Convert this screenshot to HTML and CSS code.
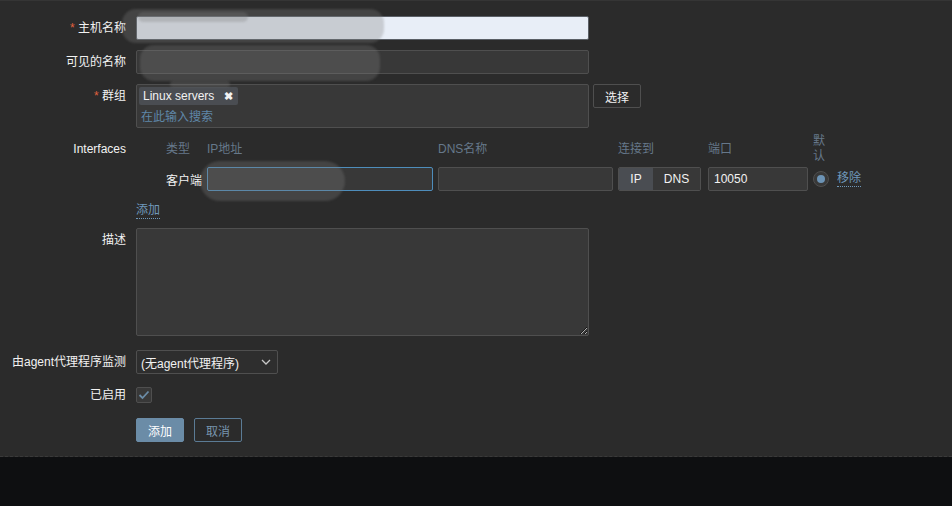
FILE: index.html
```html
<!DOCTYPE html>
<html lang="zh-CN">
<head>
    <meta charset="UTF-8">
    <title>主机</title>
    <link rel="stylesheet" href="styles.css">
</head>
<body>
    <div class="form-wrap">
        <div class="row">
            <label class="lbl"><span class="req">*</span> 主机名称</label>
            <input class="field autofill" type="text">
        </div>
        <div class="row">
            <label class="lbl">可见的名称</label>
            <input class="field" type="text">
        </div>
        <div class="row">
            <label class="lbl"><span class="req">*</span> 群组</label>
            <div class="multiselect">
                <span class="tag">Linux servers <b class="tag-x">&#10006;</b></span>
                <span class="ms-search">在此输入搜索</span>
            </div>
            <button class="btn-alt">选择</button>
        </div>

        <div class="row row-iface">
            <label class="lbl lbl-iface">Interfaces</label>
            <div class="iface">
                <div class="iface-grid">
                    <div class="th">类型</div>
                    <div class="th">IP地址</div>
                    <div class="th">DNS名称</div>
                    <div class="th">连接到</div>
                    <div class="th">端口</div>
                    <div class="th th-def">默认</div>
                    <div class="th"></div>

                    <div class="td type">客户端</div>
                    <div class="td"><input class="field ip focused" type="text"></div>
                    <div class="td"><input class="field dns" type="text"></div>
                    <div class="td">
                        <div class="toggle">
                            <span class="tg on">IP</span><span class="tg">DNS</span>
                        </div>
                    </div>
                    <div class="td"><input class="field port" type="text" value="10050"></div>
                    <div class="td"><span class="radio"><span class="dot"></span></span></div>
                    <div class="td"><a class="link">移除</a></div>
                </div>
                <a class="link add-link">添加</a>
            </div>
        </div>

        <div class="row row-desc">
            <label class="lbl">描述</label>
            <textarea class="field desc"></textarea>
        </div>
        <div class="row row-proxy">
            <label class="lbl">由agent代理程序监测</label>
            <div class="select">
                <span>(无agent代理程序)</span>
                <svg width="10" height="6" viewBox="0 0 10 6"><path d="M1 1l4 4 4-4" fill="none" stroke="#c8c8c8" stroke-width="1.3"/></svg>
            </div>
        </div>
        <div class="row row-check">
            <label class="lbl lbl-check">已启用</label>
            <span class="checkbox">
                <svg width="12" height="10" viewBox="0 0 12 10"><path d="M1.5 5l3 3 6-6.5" fill="none" stroke="#6b8ca7" stroke-width="1.8"/></svg>
            </span>
        </div>
        <div class="row row-btns">
            <span class="lbl"></span>
            <button class="btn-main">添加</button>
            <button class="btn-cancel">取消</button>
        </div>

        <!-- redaction smudges from the screenshot -->
        <div class="smudge s1"></div>
        <div class="smudge s2"></div>
        <div class="smudge s3"></div>
        <div class="smudge s4"></div>
        <div class="smudge s5"></div>
    </div>
</body>
</html>
```

FILE: styles.css
```css
body {
    margin: 0;
    background: #0e0f11;
    font-family: Arial, "Liberation Sans", "Noto Sans CJK SC", sans-serif;
    font-size: 12px;
    color: #f2f2f2;
}
.form-wrap {
    position: relative;
    height: 457px;
    box-sizing: border-box;
    background: #2b2b2b;
    border-top: 1px solid #353535;
    border-bottom: 1px dashed #3a3a3a;
    padding-top: 15px;
}
.row {
    display: flex;
    align-items: flex-start;
    margin-bottom: 10px;
}
.lbl {
    width: 126px;
    flex: none;
    padding-right: 10px;
    text-align: right;
    line-height: 24px;
}
.req {
    color: #e0613f;
}
.field {
    box-sizing: border-box;
    height: 24px;
    width: 453px;
    margin: 0;
    padding: 0 5px;
    background: #383838;
    border: 1px solid #4f4f4f;
    border-radius: 2px;
    color: #f2f2f2;
    font: inherit;
    outline: none;
}
.autofill {
    background: #e8eef7;
    border-color: #5a5f66;
}
.multiselect {
    box-sizing: border-box;
    width: 453px;
    height: 44px;
    background: #383838;
    border: 1px solid #4f4f4f;
    border-radius: 2px;
    padding: 2px 2px 0;
}
.tag {
    display: inline-block;
    background: #4a4d52;
    border-radius: 2px;
    height: 18px;
    line-height: 18px;
    padding: 0 5px 0 4px;
}
.tag-x {
    font-size: 11px;
    margin-left: 6px;
}
.ms-search {
    display: block;
    color: #5f87a8;
    line-height: 24px;
    padding-left: 2px;
}
.btn-alt {
    margin-left: 4px;
    box-sizing: border-box;
    width: 48px;
    height: 24px;
    background: #2b2b2b;
    border: 1px solid #4f4f4f;
    border-radius: 2px;
    color: #f2f2f2;
    font: inherit;
}
.row-iface {
    margin-top: -4px;
    margin-bottom: 9px;
}
.lbl-iface {
    line-height: 30px;
}
.iface {
    padding-left: 30px;
}
.iface-grid {
    display: grid;
    grid-template-columns: 41px 231px 180px 90px 105px 24px auto;
    grid-template-rows: 30px 24px;
    row-gap: 3px;
}
.th {
    color: #66788a;
    align-self: center;
    line-height: 15px;
}
.th-def {
    width: 14px;
}
.td {
    display: flex;
    align-items: center;
}
.type {
    color: #f2f2f2;
}
.field.ip {
    width: 226px;
}
.field.focused {
    border-color: #4e8dbb;
}
.field.dns {
    width: 175px;
}
.field.port {
    width: 100px;
}
.toggle {
    display: flex;
    box-sizing: border-box;
    width: 83px;
    height: 24px;
    border: 1px solid #4f4f4f;
    border-radius: 2px;
    overflow: hidden;
}
.tg {
    flex: 1;
    text-align: center;
    line-height: 22px;
    background: #383838;
}
.tg.on {
    flex: none;
    width: 34px;
    background: #4a4d52;
}
.radio {
    box-sizing: border-box;
    width: 16px;
    height: 16px;
    border-radius: 50%;
    border: 1px solid #4f4f4f;
    background: #383838;
    display: flex;
    align-items: center;
    justify-content: center;
}
.dot {
    width: 8px;
    height: 8px;
    border-radius: 50%;
    background: #6c93b5;
}
.link {
    color: #6f98ba;
    border-bottom: 1px dotted #6f98ba;
    line-height: 15px;
    cursor: pointer;
}
.add-link {
    display: inline-block;
    margin-top: 12px;
    margin-left: -30px;
}
.row-desc {
    margin-bottom: 14px;
}
.desc {
    height: 108px;
    resize: both;
}
.row-proxy {
    margin-bottom: 13px;
}
.select {
    box-sizing: border-box;
    width: 142px;
    height: 24px;
    border: 1px solid #4f4f4f;
    border-radius: 2px;
    background: #2e2e2e;
    display: flex;
    align-items: center;
    justify-content: space-between;
    padding: 0 6px 0 4px;
}
.row-check {
    margin-bottom: 15px;
}
.lbl-check {
    line-height: 16px;
}
.checkbox {
    box-sizing: border-box;
    width: 16px;
    height: 16px;
    border: 1px solid #4f4f4f;
    border-radius: 2px;
    background: #383838;
    display: flex;
    align-items: center;
    justify-content: center;
}
.btn-main,
.btn-cancel {
    box-sizing: border-box;
    width: 48px;
    height: 24px;
    border-radius: 2px;
    font: inherit;
}
.btn-main {
    background: #6b8ca7;
    border: 1px solid #6b8ca7;
    color: #ffffff;
}
.btn-cancel {
    margin-left: 10px;
    background: transparent;
    border: 1px solid #5b7b95;
    color: #7895ae;
}
.smudge {
    position: absolute;
    background: rgba(127, 127, 127, 0.3);
    border-radius: 14px;
    filter: blur(1px);
}
.s1 { left: 122px; top: 8px; width: 262px; height: 34px; }
.s2 { left: 140px; top: 44px; width: 240px; height: 36px; }
.s3 { left: 200px; top: 160px; width: 145px; height: 40px; border-radius: 20px; }
.s4 { left: 170px; top: 80px; width: 60px; height: 6px; }
.s5 { left: 138px; top: 11px; width: 110px; height: 10px; }
```
